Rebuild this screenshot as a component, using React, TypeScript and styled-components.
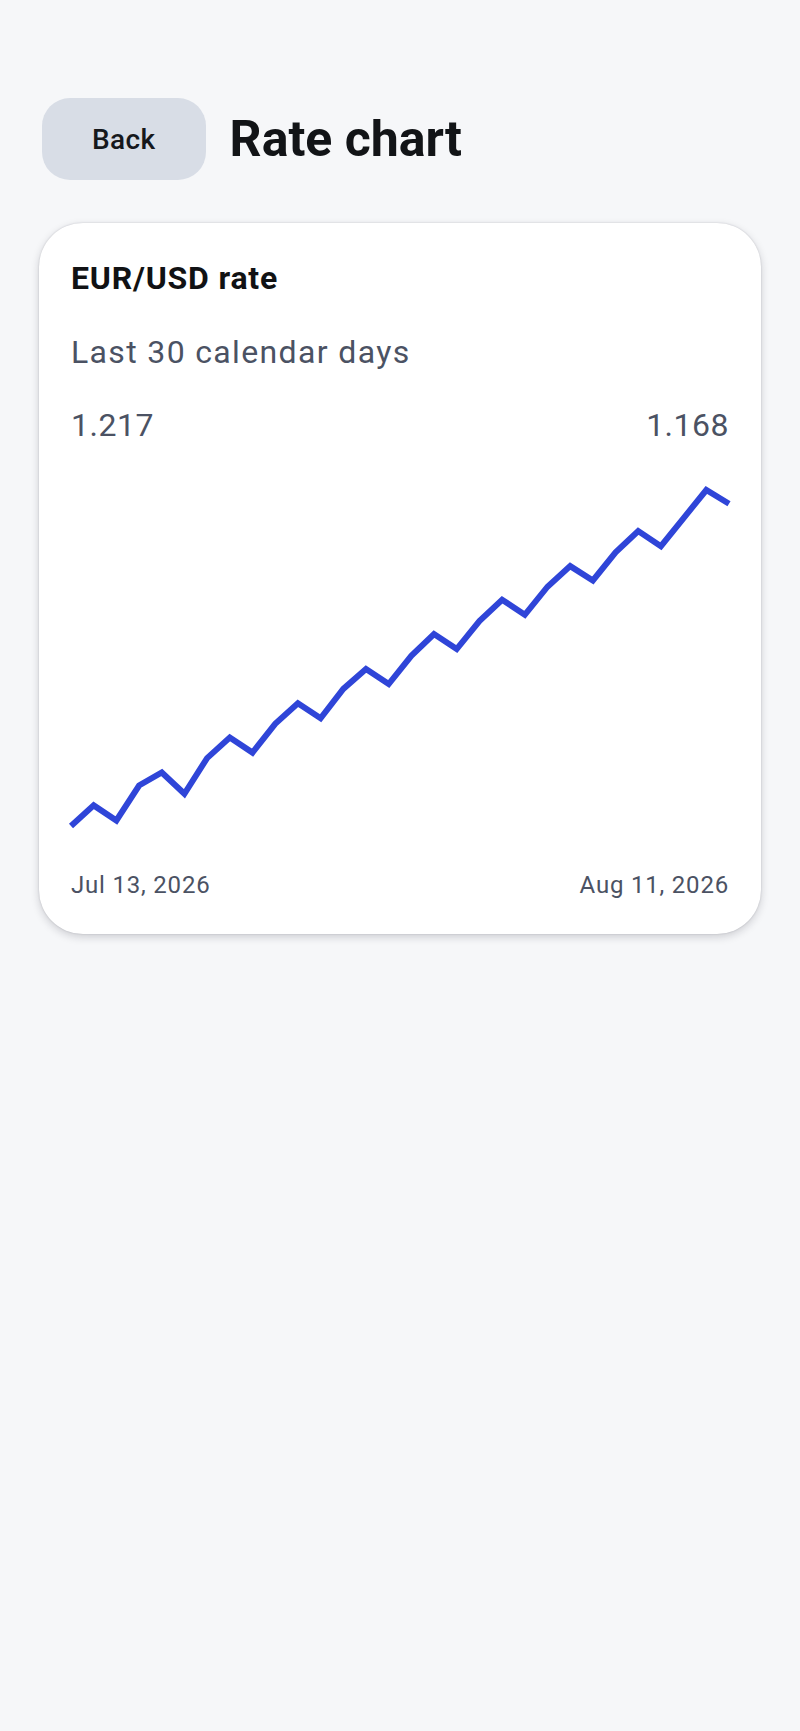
import React from 'react';
import styled, { createGlobalStyle } from 'styled-components';

const GlobalStyle = createGlobalStyle`
  html, body {
    margin: 0;
    padding: 0;
    background: #f6f7f9;
  }
  body {
    font-family: Roboto, "Noto Sans", "Liberation Sans", sans-serif;
    color: #16181c;
  }
`;

const rates = [
  1.168, 1.171, 1.1688, 1.1739, 1.1758, 1.1727, 1.1779, 1.1809, 1.1787, 1.1829,
  1.1859, 1.1837, 1.188, 1.1909, 1.1887, 1.1928, 1.196, 1.1938, 1.1979, 1.201,
  1.1988, 1.2029, 1.2059, 1.2038, 1.2079, 1.211, 1.2088, 1.2129, 1.217, 1.215,
];

const CHART_W = 658;
const CHART_H = 376;
const CHART_PAD = 20;

const Page = styled.main`
  min-height: 1731px;
  box-sizing: border-box;
  padding: 98px 39px 0;
`;

const Header = styled.header`
  display: flex;
  align-items: center;
  gap: 24px;
  height: 82px;
  padding-left: 3px;
`;

const BackButton = styled.button`
  height: 82px;
  padding: 0 50px;
  border: none;
  border-radius: 28px;
  background: #d8dde6;
  color: #16181c;
  font-family: Roboto, sans-serif;
  font-size: 28px;
  font-weight: 500;
  letter-spacing: 0.4px;
  cursor: pointer;
`;

const Title = styled.h1`
  margin: 0;
  font-size: 50px;
  font-weight: 700;
  line-height: 1.2;
  color: #121417;
`;

const Card = styled.section`
  margin-top: 43px;
  background: #ffffff;
  border-radius: 44px;
  padding: 35px 32px 33px;
  box-shadow: 0 3px 8px rgba(20, 24, 40, 0.18), 0 0 2px rgba(20, 24, 40, 0.18);
`;

const CardTitle = styled.h2`
  margin: 0;
  font-size: 32px;
  font-weight: 700;
  line-height: 40px;
  letter-spacing: 0.8px;
  color: #111214;
`;

const Subtitle = styled.p`
  margin: 34px 0 0;
  font-size: 32px;
  line-height: 40px;
  letter-spacing: 1.35px;
  color: #4b5263;
`;

const Row = styled.div<{ $top: number; $size: number; $lh: number; $ls: number }>`
  display: flex;
  justify-content: space-between;
  margin-top: ${(p) => p.$top}px;
  font-size: ${(p) => p.$size}px;
  line-height: ${(p) => p.$lh}px;
  letter-spacing: ${(p) => p.$ls}px;
  color: #4b5263;
`;

const Chart = styled.svg`
  display: block;
  width: 100%;
  height: ${CHART_H}px;
  margin-top: 25px;
  overflow: visible;
`;

function buildPath(values: number[]) {
  const min = Math.min(...values);
  const max = Math.max(...values);
  const step = CHART_W / (values.length - 1);
  return values
    .map((v, i) => {
      const x = i * step;
      const y = CHART_PAD + ((max - v) / (max - min)) * (CHART_H - CHART_PAD * 2);
      return `${i === 0 ? 'M' : 'L'}${x.toFixed(1)} ${y.toFixed(1)}`;
    })
    .join(' ');
}

const App: React.FC = () => {
  const path = buildPath(rates);

  return (
    <>
      <GlobalStyle />
      <Page>
        <Header>
          <BackButton type="button">Back</BackButton>
          <Title>Rate chart</Title>
        </Header>
        <Card>
          <CardTitle>EUR/USD rate</CardTitle>
          <Subtitle>Last 30 calendar days</Subtitle>
          <Row $top={33} $size={32} $lh={40} $ls={0.5}>
            <span>1.217</span>
            <span>1.168</span>
          </Row>
          <Chart viewBox={`0 0 ${CHART_W} ${CHART_H}`} preserveAspectRatio="none">
            <path
              d={path}
              fill="none"
              stroke="#2f45d8"
              strokeWidth={6}
              strokeLinejoin="miter"
              vectorEffect="non-scaling-stroke"
            />
          </Chart>
          <Row $top={23} $size={24} $lh={32} $ls={0.8}>
            <span>Jul 13, 2026</span>
            <span>Aug 11, 2026</span>
          </Row>
        </Card>
      </Page>
    </>
  );
};

export default App;
